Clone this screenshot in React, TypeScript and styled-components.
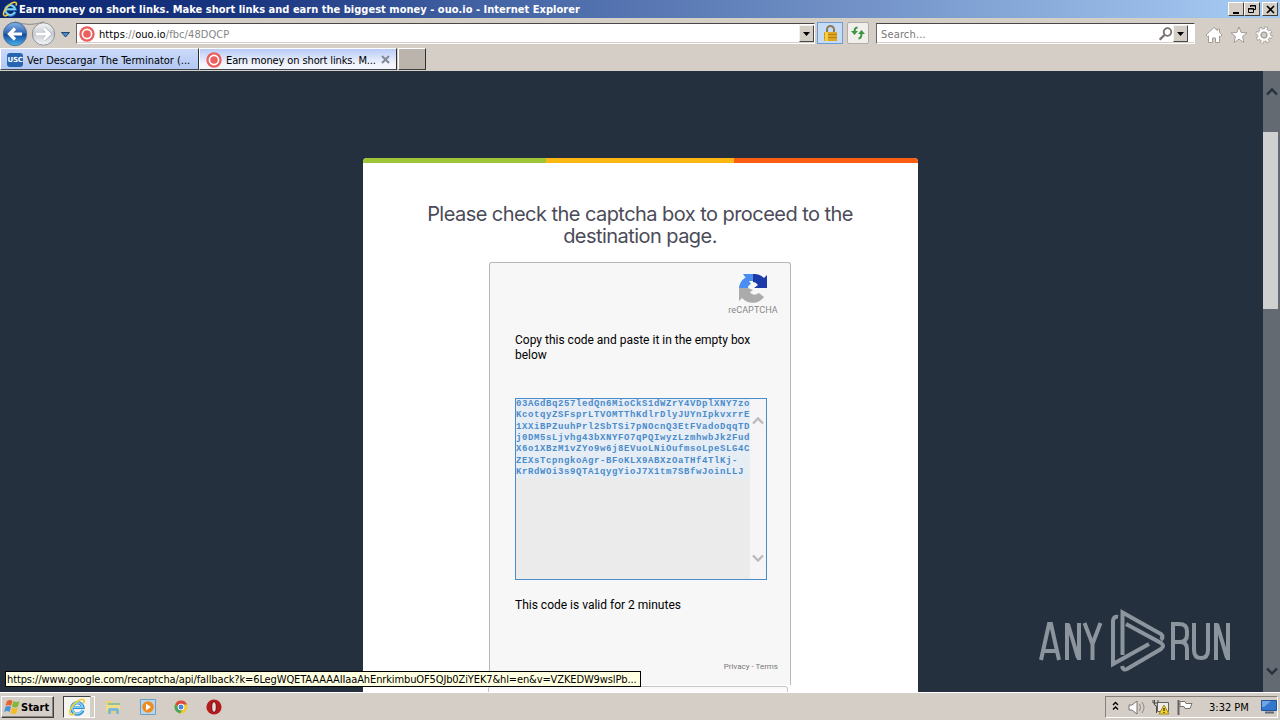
import type React from 'react';
import styled, { createGlobalStyle } from 'styled-components';

const colors = {
  chrome: '#d4cec7',
  navy: '#25303e',
  white: '#ffffff',
  heading: '#4b4b58',
  codeBlue: '#4a8ccb',
};

const GlobalStyle = createGlobalStyle`
  * { box-sizing: border-box; }
  body {
    margin: 0;
    overflow: hidden;
    font-family: 'DejaVu Sans Condensed', 'DejaVu Sans', sans-serif;
    font-stretch: condensed;
    font-size: 11px;
    color: #000;
  }
  svg { display: block; flex: none; }
`;

const Screen = styled.div`
  width: 1280px;
  height: 720px;
  display: flex;
  flex-direction: column;
  overflow: hidden;
  background: ${colors.chrome};
`;

const Label = styled.span<{ $spacing?: number; $color?: string; $bold?: boolean }>`
  white-space: nowrap;
  font-size: 11px;
  font-weight: ${({ $bold }) => ($bold ? 700 : 400)};
  letter-spacing: ${({ $spacing = 0 }) => $spacing}px;
  color: ${({ $color = '#000' }) => $color};
`;

const TitleBar = styled.header`
  height: 18px;
  flex: none;
  display: flex;
  align-items: center;
  padding: 0 2px;
  background: linear-gradient(90deg, #0c2670 0%, #1b3782 20%, #4261a2 37%, #7090c6 66%, #a5caf2 98%);
`;

const TitleText = styled(Label)`
  margin-left: 1px;
  flex: 1;
`;

const WindowButton = styled.span<{ $gap?: number }>`
  width: 16px;
  height: 14px;
  margin-left: ${({ $gap = 0 }) => $gap}px;
  background: ${colors.chrome};
  border: 1px solid;
  border-color: #fff #404040 #404040 #fff;
  display: flex;
  align-items: center;
  justify-content: center;
`;

const Toolbar = styled.div`
  height: 30px;
  flex: none;
  display: flex;
  align-items: flex-start;
  padding: 4px 0 0 2px;
  border-top: 1px solid #d0d2c4;
`;

const NavButtons = styled.div`
  width: 74px;
  height: 26px;
  margin-top: -2px;
  flex: none;
`;

const Field = styled.div<{ $width: number; $left?: number }>`
  width: ${({ $width }) => $width}px;
  height: 21px;
  flex: none;
  display: flex;
  align-items: center;
  margin-left: ${({ $left = 0 }) => $left}px;
  padding-left: 2px;
  background: ${colors.white};
  border: 1px solid;
  border-color: #4c4648 #fff #fff #6a6464;
  box-shadow: inset 0 -1px 0 #d8d0c8;
`;

const FieldText = styled(Label)<{ $left?: number }>`
  flex: 1;
  margin: 1px 0 0 ${({ $left = 4 }) => $left}px;
`;

const DropButton = styled.span<{ $right?: number }>`
  width: 15px;
  height: 17px;
  margin-right: ${({ $right = 0 }) => $right}px;
  background: ${colors.chrome};
  border: 1px solid;
  border-color: #f4f0ec #484848 #484848 #f4f0ec;
  display: flex;
  align-items: center;
  justify-content: center;
`;

const SquareButton = styled.span<{ $active?: boolean; $width: number; $left: number }>`
  width: ${({ $width }) => $width}px;
  height: 22px;
  margin: -1px 0 0 ${({ $left }) => $left}px;
  display: flex;
  align-items: center;
  justify-content: center;
  border: 1px solid ${({ $active }) => ($active ? '#6f9bd2' : '#b0aca8')};
  border-radius: ${({ $active }) => ($active ? 0 : 2)}px;
  background: ${({ $active }) => ($active ? '#c4dcf8' : '#f1efec')};
`;

const CommandIcons = styled.div`
  display: flex;
  gap: 7px;
  margin: 3px 0 0 10px;
`;

const TabStrip = styled.div`
  height: 23px;
  flex: none;
  display: flex;
  align-items: flex-start;
`;

const Tab = styled.div<{ $width: number; $selected?: boolean }>`
  width: ${({ $width }) => $width}px;
  height: 22px;
  display: flex;
  align-items: center;
  padding: 1px 6px 0 6px;
  background: ${({ $selected }) =>
    $selected ? 'linear-gradient(#b8caf7, #f2f5fc 75%)' : 'linear-gradient(#cbdafa, #b3c8f2)'};
  border: 1px solid;
  border-color: #fff #303030 #404850 #fff;
`;

const TabLabel = styled(Label)`
  flex: 1;
  margin: 1px 0 0 4px;
`;

const NewTab = styled.div`
  width: 28px;
  height: 22px;
  margin-left: 1px;
  background: #bbb4ad;
  border: 1px solid;
  border-color: #fff #303030 #404040 #fff;
`;

const Viewport = styled.main`
  position: relative;
  height: 621px;
  flex: none;
  display: flex;
  background: ${colors.navy};
  overflow: hidden;
`;

const PageArea = styled.div`
  width: 1263px;
  padding: 87px 0 0 363px;
`;

const Scrollbar = styled.div`
  width: 17px;
  height: 621px;
  background: #646a72;
  display: flex;
  flex-direction: column;
  align-items: flex-end;
  justify-content: space-between;
  padding: 17px 2px 17px 0;
`;

const ScrollThumb = styled.div`
  width: 15px;
  height: 177px;
  margin: 36px 0 auto;
  background: #d0d0d0;
`;

const Panel = styled.section`
  width: 555px;
  height: 540px;
  background: ${colors.white};
  border-radius: 4px 4px 0 0;
  overflow: hidden;
  display: flex;
  flex-direction: column;
  align-items: center;
`;

const Stripe = styled.div`
  width: 100%;
  height: 5px;
  flex: none;
  background: linear-gradient(90deg, #9fc438 0 183px, #fdb712 183px 371px, #fb5d13 371px);
`;

const Heading = styled.h1`
  margin: 40px 1px 15px 0;
  height: 44px;
  font: 400 20px/22px Inter, sans-serif;
  letter-spacing: -0.55px;
  color: ${colors.heading};
  text-align: center;
  white-space: nowrap;
`;

const Captcha = styled.div`
  width: 302px;
  height: 423px;
  flex: none;
  margin-right: 1px;
  padding: 10px 12px 0 25px;
  background: #f7f7f7;
  border: 1px solid #b8b8b8;
  border-bottom: 0;
  border-radius: 3px 3px 0 0;
  font-family: Roboto, sans-serif;
  font-stretch: normal;
`;

const Brand = styled.div`
  width: 50px;
  height: 42px;
  margin-left: auto;
  display: flex;
  flex-direction: column;
  align-items: center;
`;

const BrandName = styled.span`
  margin-top: 1px;
  font-size: 9px;
  line-height: 12px;
  letter-spacing: 0.1px;
  color: #888;
`;

const Message = styled.p<{ $top: number }>`
  margin: ${({ $top }) => $top}px 0 0;
  font-size: 12px;
  line-height: 15px;
  color: #000;
  white-space: pre;
`;

const CodeBox = styled.div`
  width: 252px;
  height: 182px;
  margin-top: 35px;
  display: flex;
  border: 1px solid ${colors.codeBlue};
  background: #f5f5f5;
`;

const Code = styled.div`
  width: 234px;
  background: #ebebeb;
  font: 700 9px/11.33px 'Liberation Mono', monospace;
  letter-spacing: 0.6px;
  white-space: pre;
  color: ${colors.codeBlue};
`;

const CodeLine = styled.div`
  width: 234px;
  background: #e7edf5;
`;

const CodeScroll = styled.div`
  width: 16px;
  display: flex;
  flex-direction: column;
  align-items: center;
  justify-content: space-between;
  padding: 18px 0 17px;
`;

const Legal = styled.div`
  margin-top: 49px;
  font-size: 8px;
  line-height: 10px;
  color: #777;
  text-align: right;
`;

const NextBox = styled.div`
  width: 300px;
  height: 10px;
  margin: 1px 5px 0 0;
  flex: none;
  border: 1px solid #c4c4c4;
  border-radius: 3px;
  background: #fbfbfb;
`;

const StatusTip = styled.div`
  position: absolute;
  left: 5px;
  bottom: 5px;
  width: 636px;
  height: 16px;
  padding-left: 1px;
  line-height: 15px;
  background: #ffffe1;
  border: 1px solid #000;
`;

const Watermark = styled.div`
  position: absolute;
  left: 1038px;
  top: 538px;
`;

const Taskbar = styled.footer`
  height: 28px;
  flex: none;
  display: flex;
  align-items: center;
  padding: 1px 2px 0 1px;
  border-top: 1px solid #fff;
  background: ${colors.chrome};
`;

const StartButton = styled.div`
  width: 53px;
  height: 22px;
  display: flex;
  align-items: center;
  padding-left: 2px;
  border: 1px solid;
  border-color: #fff #404040 #404040 #fff;
  box-shadow: inset -1px -1px 0 #8c8680;
`;

const RunningTask = styled.div`
  width: 28px;
  height: 22px;
  margin-left: 9px;
  display: flex;
  align-items: center;
  justify-content: center;
  background: #f5f4f1;
  border: 1px solid;
  border-color: #404040 #d4cec7 #fff #404040;
`;

const TaskGroupEdge = styled.div`
  width: 4px;
  height: 22px;
  border: 1px solid #fff;
  border-left: 0;
`;

const QuickLaunch = styled.div`
  display: flex;
  gap: 18px;
  margin-left: 10px;
`;

const Tray = styled.div`
  width: 173px;
  height: 22px;
  margin-left: auto;
  display: flex;
  align-items: center;
  padding-left: 5px;
  border: 1px solid;
  border-color: #888078 #fff #fff #888078;
`;

const Clock = styled(Label)`
  margin: 0 12px 0 16px;
`;

const UscBadge = styled.span`
  width: 16px;
  height: 14px;
  border-radius: 3px;
  background: #2765b0;
  color: #fff;
  font: 700 7px/14px 'DejaVu Sans', sans-serif;
  letter-spacing: -0.3px;
  text-align: center;
  text-transform: uppercase;
`;

const IeIcon: React.FC<{ size: number }> = ({ size }) => (
  <svg width={size} height={size} viewBox="0 0 18 18" fill="none">
    <path d="M14.8 12.2A5.7 5.7 0 1 1 15 9.500H5" stroke="#2d8bcc" strokeWidth="3.2" />
    <path d="M14.4 12.2A5.4 5.4 0 1 1 14.7 9.2H5" stroke="#82d0f5" strokeWidth="1.8" />
    <path d="M2.5 16.5C-1 13 8 2 14 1.3c3-.2 2.4 2.4 1.6 4M2.5 16.5c1.6.8 3.4-.4 4.5-1.2" stroke="#efcf3c" strokeWidth="1.7" />
  </svg>
);

const OuoIcon = () => (
  <svg width="16" height="16" viewBox="0 0 16 16">
    <circle cx="8" cy="8" r="7.7" fill="#e9605f" />
    <circle cx="8" cy="8" r="4.6" fill="#e9605f" stroke="#fff" strokeWidth="1.6" />
  </svg>
);

const Arrow = () => (
  <svg width="7" height="4" viewBox="0 0 7 4"><path d="M0 0h7L3.5 4z" fill="#000" /></svg>
);

const Chevron: React.FC<{ down?: boolean; color: string }> = ({ down, color }) => (
  <svg width="12" height="8" viewBox="0 0 12 8">
    <path d={down ? 'M1 1.5 6 6.500l5-5' : 'M1 6.500l5-5 5 5'} fill="none" stroke={color} strokeWidth="2.4" />
  </svg>
);

const NavIcons = () => (
  <svg width="74" height="28" viewBox="0 0 74 28">
    <defs>
      <linearGradient id="back" x1="0" y1="0" x2="0" y2="1">
        <stop stopColor="#83b3e8" /><stop offset=".48" stopColor="#2c64b3" />
        <stop offset=".5" stopColor="#0f4699" /><stop offset="1" stopColor="#48b4f1" />
      </linearGradient>
      <linearGradient id="forward" x1="0" y1="0" x2="0" y2="1">
        <stop stopColor="#f5f5f5" /><stop offset=".5" stopColor="#c8cdd3" /><stop offset="1" stopColor="#f4f6f8" />
      </linearGradient>
    </defs>
    <path d="M13 .8Q28 6 42 .8" stroke="#8f8a85" fill="none" />
    <circle cx="13" cy="13" r="11.7" fill="url(#back)" stroke="#546f92" />
    <circle cx="41.5" cy="13" r="11.2" fill="url(#forward)" stroke="#8f9296" />
    <path d="M20 13H8M13 7.5 7.5 13l5.5 5.5" stroke="#fff" strokeWidth="3.2" fill="none" />
    <path d="M34 13h13M42 7.5l5.5 5.5-5.5 5.5" stroke="#aeb3b8" strokeWidth="4.2" fill="none" />
    <path d="M34 13h13M42 7.5l5.5 5.5-5.5 5.5" stroke="#fff" strokeWidth="2.8" fill="none" />
    <path d="M59.5 11.5h8l-4 4.5z" fill="#438bca" stroke="#24476e" />
  </svg>
);

const LockIcon = () => (
  <svg width="15" height="17" viewBox="0 0 15 17">
    <path d="M4 8V4.5a3.5 3.5 0 0 1 7 0V8" fill="none" stroke="#8f7a4d" strokeWidth="2" />
    <path d="M1 7h13v9H1z" fill="#e0a520" />
    <path d="M1 9.5h13M1 12.5h13" stroke="#b98212" />
    <path d="M2 7h3v9H2z" fill="#f5cc4a" />
  </svg>
);

const RefreshIcon = () => (
  <svg width="14" height="14" viewBox="0 0 14 14" fill="none" stroke="#38963c" strokeWidth="1.9">
    <path d="M6.5 1.5C4 1.5 3.5 3 3.5 6M7.5 12.5c2.5 0 3-2 3-5" />
    <path d="M0 5h7L3.5 9zM7 8h7l-3.5-4z" fill="#38963c" stroke="none" />
  </svg>
);

const SearchIcon = () => (
  <svg width="14" height="14" viewBox="0 0 14 14" fill="none" stroke="#77716f" strokeWidth="1.8">
    <circle cx="8.5" cy="5" r="3.8" /><path d="m5.7 7.7-5 5" strokeWidth="2.2" />
  </svg>
);

const HomeIcon = () => (
  <svg width="18" height="18" viewBox="0 0 18 18" fill="#fff" stroke="#a19c97">
    <path d="M9 1.5 1 9l1.5 1.5 1-.5v6.5h4V12h3v4.5h4V10l1 .5L17 9l-2.5-2.5V3h-2v1.5z" />
  </svg>
);

const StarIcon = () => (
  <svg width="18" height="18" viewBox="0 0 18 18" fill="#fff" stroke="#a19c97">
    <path d="m9 1 2.2 5.5 5.8.3-4.5 3.7L14 16.500l-5-3.300-5 3.300 1.500-6L1 6.800l5.800-.3z" />
  </svg>
);

const GearIcon = () => (
  <svg width="18" height="18" viewBox="0 0 18 18" fill="none">
    <circle cx="9" cy="9" r="6.7" stroke="#a19c97" strokeWidth="3.6" strokeDasharray="3.2 2.062" />
    <circle cx="9" cy="9" r="4.8" stroke="#a19c97" strokeWidth="3.8" />
    <circle cx="9" cy="9" r="6.7" stroke="#fff" strokeWidth="2.2" strokeDasharray="2 3.262" strokeDashoffset="-.6" />
    <circle cx="9" cy="9" r="4.8" stroke="#fff" strokeWidth="2.4" />
    <circle cx="9" cy="9" r="2.8" fill="#d4cec7" stroke="#a19c97" />
  </svg>
);

const RecaptchaIcon = () => (
  <svg width="30" height="30" viewBox="0 0 30 30">
    <path d="M15 1H5l2.5 3.5A14 14 0 0 0 1 15h9q0-3 3-4l-2-3h4z" fill="#4a8df0" />
    <path d="M15 1v8q3 0 5 3l-4 3h13V2l-3 3A14 14 0 0 0 15 1z" fill="#1c3aa9" />
    <path d="M1 15v13l3-3a14 14 0 0 0 22-1l-5-4q-6 4-9-1l3-2-5-2z" fill="#ababab" />
  </svg>
);

const AnyRunLogo = () => (
  <svg width="196" height="66" viewBox="0 0 196 66" fill="none" stroke="#8c949d" strokeWidth="4">
    <path d="M3 51 11 15h2l8 36M6 42h12" />
    <path d="M29 51V14M30 15l10 34M41 51V14M46.5 14l8 21v16M62.5 14l-8 21" />
    <path d="M135 51V15h6q8 0 8 7v4q0 7-8 7h-6M142 33q7 0 7 7v11" />
    <path d="M156 14v27q0 8 7 8t7-8V14M178 51V14M179 15l10 34M190 51V14" />
    <path
      d="M80 8q-5-1-5 5v42l36-20M84.5 46V3.500L123 25q3 3 0 6M88 15l35 19q4 3 0 6L89 60q-4 2-5-3"
      strokeWidth="4"
    />
  </svg>
);

const WindowsIcon = () => (
  <svg width="17" height="16" viewBox="0 0 17 16">
    <path d="M3 2q3-2 5.5 0L7 7Q4.5 5 1.5 7z" fill="#e9642a" />
    <path d="M9.5 2q3 2 6 0L14 7.5q-3 2-6 0z" fill="#80b83b" />
    <path d="M1.5 8q3-2 5.5 0l-1.5 5Q3 11 0 13z" fill="#4b91d4" />
    <path d="M8 8.5q3 2 6 0L12.5 14q-3 2-6 0z" fill="#f4bd28" />
  </svg>
);

const FolderIcon = () => (
  <svg width="17" height="16" viewBox="0 0 17 16">
    <path d="M1 2h6l1 2h7v10H1z" fill="#ecd27a" /><path d="M3 4h12v3H3z" fill="#8ec39a" />
    <path d="M1 6h14v6H1z" fill="#f3dd8b" /><path d="M3 15v-4q0-2 2-2h7q2 0 2 2v4h-3v-3H6v3z" fill="#7bb8dc" />
  </svg>
);

const PlayerIcon = () => (
  <svg width="16" height="16" viewBox="0 0 16 16">
    <path d="M.5.5h15v15H.5z" fill="#b9d6ea" stroke="#6c9fc6" /><circle cx="8" cy="8" r="5.8" fill="#f08a1d" />
    <path d="m6 4.5 5 3.5-5 3.5z" fill="#fff" />
  </svg>
);

const ChromeIcon = () => (
  <svg width="14" height="16" viewBox="0 0 14 16">
    <circle cx="7" cy="8" r="6.5" fill="#f3c931" />
    <path d="M1.3 5A6.5 6.5 0 0 1 13 5.5H7L4 8z" fill="#dd4a3e" />
    <path d="M1.3 5A6.5 6.5 0 0 0 6 14.5L9 10 5 9z" fill="#4ba558" />
    <circle cx="7" cy="8" r="3" fill="#4a86d8" stroke="#fff" />
  </svg>
);

const OperaIcon = () => (
  <svg width="16" height="16" viewBox="0 0 16 16">
    <circle cx="8" cy="8" r="7.6" fill="#b51a1c" />
    <ellipse cx="8" cy="8" rx="2.3" ry="5.3" fill="#e8dedb" stroke="#6c0d10" />
  </svg>
);

const TrayIcons = () => (
  <svg width="82" height="20" viewBox="0 0 82 20" fill="none">
    <path d="m2 8 2.5-2.5L7 8M2 12.5 4.5 10 7 12.5" stroke="#000" strokeWidth="1.4" />
    <path d="M18 8h3l5-4v13l-5-4h-3z" fill="#fff" stroke="#77736f" />
    <path d="M28.5 7q2 3 0 7M31 5q4 5.5 0 11" stroke="#8b8783" />
    <path d="M46.5 5.5h11v9h-11z" fill="#ececec" stroke="#66625e" />
    <path d="M43.5 3v4q0 2 2 2v7M42 3v3h5V3" stroke="#4d4a47" />
    <path d="m53 8 5 9H48z" fill="#f5cf2b" stroke="#a68b20" /><path d="M53 11v3m0 1v1" stroke="#000" />
    <path d="M67.5 3v15" stroke="#66625e" strokeWidth="2" /><path d="M69 4.5h5l1 2h6l-2 5h-5l-1-2h-4z" fill="#fff" stroke="#77736f" />
  </svg>
);

const DesktopIcon = () => (
  <svg width="16" height="14" viewBox="0 0 16 14">
    <path d="M.5.5h15v10H.5z" fill="#3277cd" stroke="#215398" /><path d="M1 1h9L3 7H1z" fill="#71a6e4" />
    <path d="M4 12.5h9" stroke="#5e6872" strokeWidth="2" />
  </svg>
);

const codeLines = [
  '03AGdBq257ledQn6MioCkS1dWZrY4VDplXNY7zo',
  'KcotqyZSFsprLTVOMTThKdlrDlyJUYnIpkvxrrE',
  '1XXiBPZuuhPrl2SbTSi7pNOcnQ3EtFVadoDqqTD',
  'j0DM5sLjvhg43bXNYFO7qPQIwyzLzmhwbJk2Fud',
  'X6o1XBzM1vZYo9w6j8EVuoLNiOufmsoLpeSLG4C',
  'ZEXsTcpngkoAgr-BFoKLX9ABXzOaTHf4TlKj-',
  'KrRdWOi3s9QTA1qygYioJ7X1tm7SBfwJoinLLJ',
];

const BrowserChrome = () => (
  <>
    <TitleBar>
      <IeIcon size={16} />
      <TitleText $bold $color="#fff" $spacing={0.02}>
        Earn money on short links. Make short links and earn the biggest money - ouo.io - Internet Explorer
      </TitleText>
      <WindowButton><svg width="9" height="9"><path d="M1 8h6" stroke="#000" strokeWidth="2" /></svg></WindowButton>
      <WindowButton>
        <svg width="10" height="10" fill="none" stroke="#000"><path d="M3.5 3V1.5h5v4H7M3 2h6M1.5 4.5h5v4h-5zM1 5h6" /></svg>
      </WindowButton>
      <WindowButton $gap={2}><svg width="9" height="9"><path d="m1 1 7 7M8 1 1 8" stroke="#000" strokeWidth="1.6" /></svg></WindowButton>
    </TitleBar>
    <Toolbar>
      <NavButtons><NavIcons /></NavButtons>
      <Field $width={739}>
        <OuoIcon />
        <FieldText $color="#858585" $spacing={0.08}>
          <Label $spacing={0.08}>https</Label>://<Label $spacing={0.08}>ouo.io</Label>/fbc/48DQCP
        </FieldText>
        <DropButton><Arrow /></DropButton>
      </Field>
      <SquareButton $active $width={26} $left={2}><LockIcon /></SquareButton>
      <SquareButton $width={22} $left={4}><RefreshIcon /></SquareButton>
      <Field $width={319} $left={7}>
        <FieldText $left={2} $color="#777" $spacing={0.15}>Search...</FieldText>
        <SearchIcon />
        <DropButton $right={6}><Arrow /></DropButton>
      </Field>
      <CommandIcons><HomeIcon /><StarIcon /><GearIcon /></CommandIcons>
    </Toolbar>
    <TabStrip>
      <Tab $width={199}>
        <UscBadge>usc</UscBadge>
        <TabLabel $spacing={-0.02}>Ver Descargar The Terminator (...</TabLabel>
      </Tab>
      <Tab $width={198} $selected>
        <OuoIcon />
        <TabLabel $spacing={-0.12}>Earn money on short links. M...</TabLabel>
        <svg width="9" height="9"><path d="m1 1 7 7M8 1 1 8" stroke="#858995" strokeWidth="2" /></svg>
      </Tab>
      <NewTab />
    </TabStrip>
  </>
);

const CaptchaPanel = () => (
  <Panel>
    <Stripe />
    <Heading>Please check the captcha box to proceed to the<br />destination page.</Heading>
    <Captcha>
      <Brand><RecaptchaIcon /><BrandName>reCAPTCHA</BrandName></Brand>
      <Message $top={18}>{'Copy this code and paste it in the empty box\nbelow'}</Message>
      <CodeBox>
        <Code>{codeLines.map((line) => <CodeLine key={line}>{line}</CodeLine>)}</Code>
        <CodeScroll><Chevron color="#bbb" /><Chevron down color="#bbb" /></CodeScroll>
      </CodeBox>
      <Message $top={18}>This code is valid for 2 minutes</Message>
      <Legal>Privacy - Terms</Legal>
    </Captcha>
    <NextBox />
  </Panel>
);

const App: React.FC = () => (
  <Screen>
    <GlobalStyle />
    <BrowserChrome />
    <Viewport>
      <PageArea><CaptchaPanel /></PageArea>
      <Scrollbar><Chevron color="#25303c" /><ScrollThumb /><Chevron down color="#25303c" /></Scrollbar>
      <Watermark><AnyRunLogo /></Watermark>
      <StatusTip>
        <Label $spacing={-0.12}>
          https://www.google.com/recaptcha/api/fallback?k=6LegWQETAAAAAIIaaAhEnrkimbuOF5QJb0ZiYEK7&amp;hl=en&amp;v=VZKEDW9wslPb...
        </Label>
      </StatusTip>
    </Viewport>
    <Taskbar>
      <StartButton><WindowsIcon /><Label $bold>Start</Label></StartButton>
      <RunningTask><IeIcon size={18} /></RunningTask>
      <TaskGroupEdge />
      <QuickLaunch><FolderIcon /><PlayerIcon /><ChromeIcon /><OperaIcon /></QuickLaunch>
      <Tray><TrayIcons /><Clock>3:32 PM</Clock><DesktopIcon /></Tray>
    </Taskbar>
  </Screen>
);

export default App;
